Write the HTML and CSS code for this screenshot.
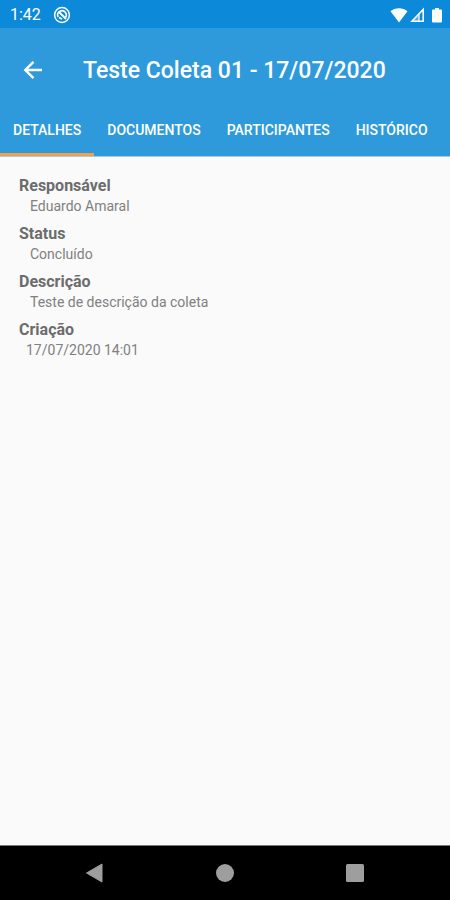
FILE: index.html
```
<!DOCTYPE html>
<html lang="pt-BR">
<head>
    <meta charset="UTF-8">
    <meta name="viewport" content="width=device-width, initial-scale=1">
    <title>Teste Coleta 01</title>
    <link rel="stylesheet" href="styles.css">
</head>
<body>
    <div class="status-bar">
        <span class="clock">1:42</span>
        <svg class="status-app" width="18" height="18" viewBox="0 0 18 18" fill="none" stroke="#fff">
            <circle cx="9" cy="9" r="7.4" stroke-width="1.5"/>
            <path d="M5.200 11A4.300 4.300 0 0 1 12.500 6.500A4.300 4.300 0 0 1 12.500 11.500" stroke-width="1.6"/>
            <path d="M5.500 5.500l7.500 7.500" stroke-width="1.8"/>
            <path d="M6 11.500l3 1.500" stroke-width="1.4"/>
        </svg>
        <div class="status-icons">
            <svg width="18" height="16" viewBox="0 0 18 16" fill="#fff">
                <path d="M9 15.5L0.5 4.2C5 0.2 13 0.2 17.5 4.2z"/>
            </svg>
            <svg width="16" height="16" viewBox="0 0 16 16">
                <path d="M2 14.200H13.200V2.500z" fill="none" stroke="#fff" stroke-width="1.6"/>
                <path d="M9 7V14H2.500z" fill="#fff" opacity="0.3"/>
                <path d="M9 7V14" stroke="#fff" stroke-width="1.2"/>
            </svg>
            <svg width="10" height="16" viewBox="0 0 10 16" fill="#fff">
                <path d="M3 1h4v1.5h2q1 0 1 1V14.500q0 1-1 1H1q-1 0-1-1V3.500q0-1 1-1h2z"/>
            </svg>
        </div>
    </div>

    <header class="app-bar">
        <div class="toolbar">
            <button class="back" type="button" aria-label="Voltar">
                <svg width="20" height="20" viewBox="0 0 20 20" fill="none" stroke="#fff" stroke-width="2.400">
                    <path d="M19 9H2.500M10.500 0.800L2.300 9l8.200 8.200"/>
                </svg>
            </button>
            <h1>Teste Coleta 01 - 17/07/2020</h1>
        </div>
        <nav class="tabs">
            <a class="tab active" href="#detalhes">DETALHES</a>
            <a class="tab" href="#documentos">DOCUMENTOS</a>
            <a class="tab" href="#participantes">PARTICIPANTES</a>
            <a class="tab" href="#historico">HISTÓRICO</a>
        </nav>
    </header>

    <main id="detalhes">
        <dl class="details">
            <div class="item">
                <dt>Responsável</dt>
                <dd>Eduardo Amaral</dd>
            </div>
            <div class="item">
                <dt>Status</dt>
                <dd>Concluído</dd>
            </div>
            <div class="item">
                <dt>Descrição</dt>
                <dd>Teste de descrição da coleta</dd>
            </div>
            <div class="item">
                <dt>Criação</dt>
                <dd class="date">17/07/2020 14:01</dd>
            </div>
        </dl>
    </main>

    <footer class="nav-bar">
        <button type="button" aria-label="Voltar">
            <svg width="20" height="20" viewBox="0 0 20 20" fill="#9e9e9e">
                <path d="M17 1v18L1.500 10z" stroke="#9e9e9e" stroke-linejoin="round"/>
            </svg>
        </button>
        <button type="button" aria-label="Início">
            <svg width="20" height="20" viewBox="0 0 20 20" fill="#9e9e9e">
                <circle cx="10" cy="10" r="9"/>
            </svg>
        </button>
        <button type="button" aria-label="Recentes">
            <svg width="20" height="20" viewBox="0 0 20 20" fill="#9e9e9e">
                <rect x="1" y="1" width="18" height="18" rx="1.500"/>
            </svg>
        </button>
    </footer>
</body>
</html>
```

FILE: styles.css
```
* {
    box-sizing: border-box;
}

body {
    margin: 0;
    min-height: 100vh;
    display: flex;
    flex-direction: column;
    font-family: Roboto, sans-serif;
    background-color: #fafafa;
    color: #808080;
}

button {
    padding: 0;
    border: none;
    background: none;
    cursor: pointer;
}

svg {
    display: block;
}

.status-bar {
    display: flex;
    align-items: center;
    height: 28px;
    padding: 2px 8px 0 10px;
    background-color: #0c89d8;
    color: #fff;
}

.clock {
    font-size: 16px;
    line-height: 24px;
}

.status-app {
    margin-left: 12px;
}

.status-icons {
    display: flex;
    gap: 2px;
    margin-left: auto;
}

.status-icons svg:last-child {
    margin-left: 4px;
}

.app-bar {
    background-color: #2e9adc;
    color: #fff;
    border-bottom: 1px solid #a9c9de;
}

.toolbar {
    display: flex;
    align-items: center;
    height: 84px;
    padding: 2px 16px 0;
}

.back {
    display: flex;
    align-items: center;
    justify-content: center;
    width: 34px;
    height: 48px;
}

h1 {
    margin: 0 0 0 33px;
    font-size: 23px;
    line-height: 32px;
    font-weight: 500;
    white-space: nowrap;
}

.tabs {
    display: flex;
    height: 44px;
    overflow: hidden;
}

.tab {
    padding: 6px 13px 0;
    border-bottom: 3px solid transparent;
    font-size: 14px;
    line-height: 24px;
    font-weight: 500;
    color: #fff;
    text-decoration: none;
    white-space: nowrap;
}

.tab.active {
    border-bottom-color: #f0a24e;
}

main {
    flex: 1;
    padding: 18px 19px;
}

.details {
    display: flex;
    flex-direction: column;
    gap: 8px;
    margin: 0;
}

dt {
    font-size: 16px;
    line-height: 22px;
    font-weight: 700;
    color: #6c6c6c;
}

dd {
    margin: 0 0 0 11px;
    font-size: 14px;
    line-height: 18px;
}

dd.date {
    margin-left: 7px;
}

.nav-bar {
    display: flex;
    justify-content: center;
    height: 55px;
    border-top: 1px solid #777;
    background-color: #000;
}

.nav-bar button {
    display: flex;
    align-items: center;
    justify-content: center;
    width: 130px;
}
```
